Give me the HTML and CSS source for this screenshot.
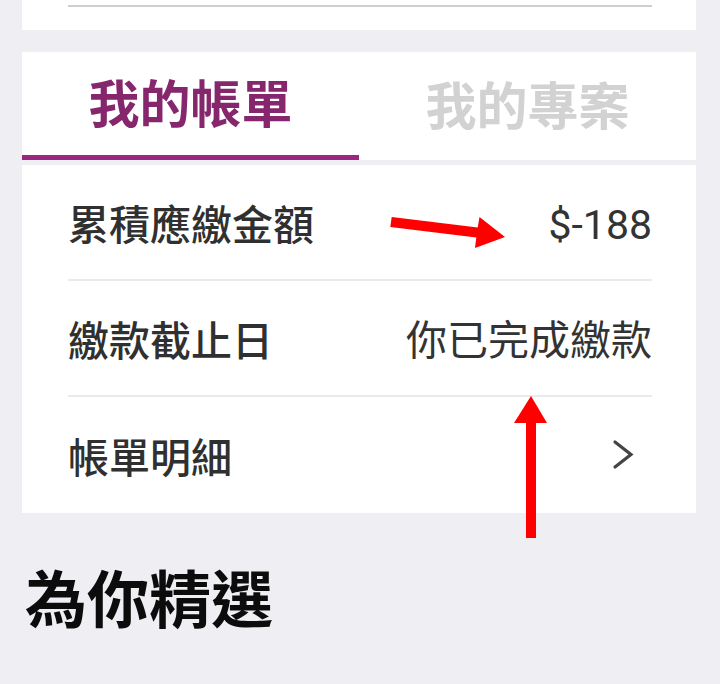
FILE: index.html
```html
<!DOCTYPE html>
<html lang="zh-Hant">
<head>
<meta charset="utf-8">
<title>我的帳單</title>
<link rel="stylesheet" href="styles.css">
</head>
<body>
<div class="page">
  <div class="top-card"><div class="rule"></div></div>

  <div class="tabs">
    <div class="tab tab-active">我的帳單</div>
    <div class="tab">我的專案</div>
  </div>

  <div class="list">
    <div class="row">
      <span class="label">累積應繳金額</span>
      <span class="value">$-188</span>
    </div>
    <div class="row">
      <span class="label">繳款截止日</span>
      <span class="value">你已完成繳款</span>
    </div>
    <div class="row row-last">
      <span class="label">帳單明細</span>
      <svg class="chevron" viewBox="0 0 24 32" width="24" height="32" aria-hidden="true">
        <path d="M3 3 L19 15.5 L3 28" fill="none" stroke="#444" stroke-width="3.2" stroke-linecap="round" stroke-linejoin="miter"/>
      </svg>
    </div>
  </div>

  <h2 class="section-title">為你精選</h2>
</div>

<svg class="annotations" viewBox="0 0 720 684" width="720" height="684" aria-hidden="true">
  <polygon fill="#ff0000" points="391.7,217 477.7,227.5 479.5,217 505,237 475,248 476.3,237.5 390.3,227"/>
  <polygon fill="#ff0000" points="531,396 547,423 536,423 536,538 526,538 526,423 514,423"/>
</svg>
</body>
</html>
```

FILE: styles.css
```css
html, body {
  margin: 0;
  padding: 0;
}

body {
  width: 720px;
  height: 684px;
  overflow: hidden;
  background: #efeef3;
  font-family: Roboto, "Noto Sans CJK TC", "Noto Sans", sans-serif;
  position: relative;
}

.page {
  padding: 0 24px 0 22px;
}

.top-card {
  height: 30px;
  background: #ffffff;
  padding-top: 5px;
  box-sizing: border-box;
}

.rule {
  height: 2px;
  margin: 0 44px 0 46px;
  background: #cfcfcf;
}

.tabs {
  margin-top: 22px;
  height: 108px;
  background: #ffffff;
  display: grid;
  grid-template-columns: 337px 1fr;
}

.tab {
  display: flex;
  align-items: center;
  justify-content: center;
  box-sizing: border-box;
  padding-bottom: 5px;
  font-family: "Noto Sans CJK TC", sans-serif;
  font-size: 51px;
  font-weight: 700;
  color: #d2d2d2;
  line-height: 1;
}

.tab-active {
  color: #86276d;
  border-bottom: 5px solid #9b2780;
}

.list {
  margin-top: 5px;
  background: #ffffff;
  padding: 0 44px 0 46px;
}

.row {
  height: 116px;
  box-sizing: border-box;
  border-bottom: 2px solid #ebebef;
  display: flex;
  align-items: center;
  justify-content: space-between;
}

.row-last {
  border-bottom: none;
}

.label {
  font-family: "Noto Sans CJK TC", sans-serif;
  font-size: 41px;
  font-weight: 500;
  color: #303030;
  line-height: 1;
}

.value {
  font-size: 41px;
  font-weight: 400;
  color: #333333;
  line-height: 1;
  padding-top: 6px;
}

.chevron {
  margin-right: 16px;
}

.section-title {
  margin: 51px 0 0 3px;
  font-family: "Noto Sans CJK TC", sans-serif;
  font-size: 62px;
  font-weight: 700;
  color: #0c0c0c;
  line-height: 64px;
}

.annotations {
  position: absolute;
  top: 0;
  left: 0;
  pointer-events: none;
}
```
